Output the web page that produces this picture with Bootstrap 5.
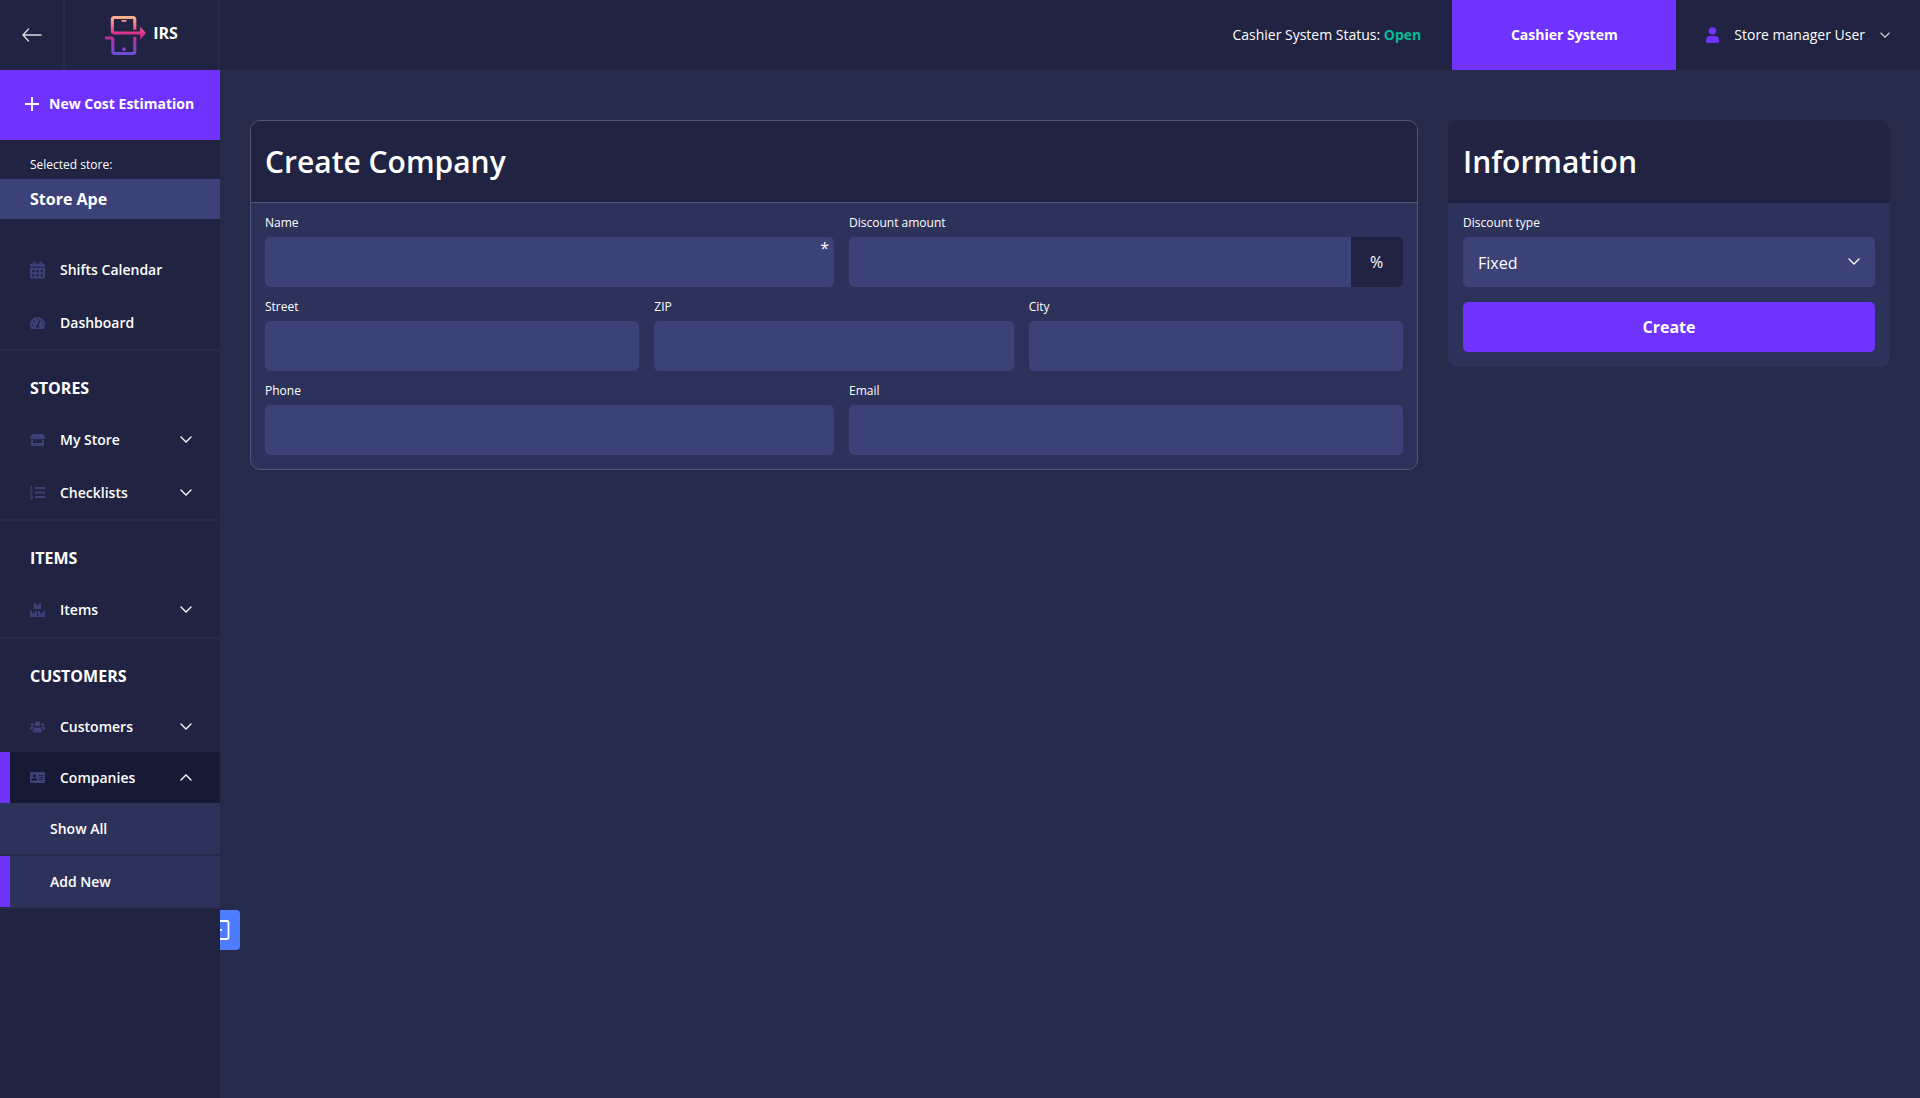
<!DOCTYPE html>
<html lang="en">
<head>
<meta charset="utf-8">
<meta name="viewport" content="width=device-width, initial-scale=1">
<title>IRS – Create Company</title>
<link href="https://cdn.jsdelivr.net/npm/bootstrap@5.3.0/dist/css/bootstrap.min.css" rel="stylesheet">
<style>
:root{--ink:#202341;--page:#272b4b;--panel:#2d325a;--field:#3c4278;--accent:#7033ff;--active:#171a35;--line:#505572}
body{font-family:"Open Sans","Noto Sans",sans-serif;font-size:14px;line-height:20px;color:#fff;background:var(--page)}
a,a:hover{color:#fff;text-decoration:none}
svg{display:block;flex:none}
.topbar{height:70px;background:var(--ink)}
.brand-zone{width:220px;border-right:2px solid var(--page)}
.back-link{width:65px;border-right:2px solid var(--page)}
.brand-link{font-size:16px;font-weight:700;gap:6px}
.brand-mark{margin-top:4px}
.status{margin-right:31px}
.status b{color:#00bd97;font-weight:700}
.cashier{width:224px;background:var(--accent);font-weight:700}
.user-menu{padding:0 30px;gap:15px;color:#fff;background:none;border:0}
.sidebar{width:220px;background:var(--ink);z-index:2}
.estimate{height:70px;padding:0 0 2px 25px;gap:10px;background:var(--accent);font-weight:700}
.store-label{height:39px;padding:15px 30px 0;font-size:12px}
.store-name{height:40px;padding:0 30px;background:var(--field);font-size:16px;font-weight:700}
.side-group{border-bottom:2px solid var(--page)}
.side-first{padding-top:24px}
.side-single{padding-bottom:1px}
.side-title{height:62px;padding:13px 30px 0;margin:0;font-size:16px;font-weight:700}
.side-item{height:53px;padding:0 28px 0 30px;font-weight:600}
.side-item .ico{color:var(--field);margin-right:15px}
.side-tight .side-item{height:51px}
.side-tight .side-item.current{background:var(--active)}
.current{border-left:10px solid var(--accent)}
.side-item.current{padding-left:20px}
.sub-item{height:51px;margin-bottom:2px;padding-left:50px;font-weight:600;background:var(--panel)}
.sub-list{background:var(--page)}
.sub-item.current{padding-left:40px}
.side-tight{border-bottom:0}
.drawer-tab{left:-20px;top:840px;width:40px;height:40px;padding:0 0 0 9px;background:#4d7cff;border:0;border-radius:4px}
.content{padding:50px 30px 30px;gap:30px}
.panel{background:var(--panel);border:0;border-radius:10px;color:#fff;overflow:hidden}
.panel-head{height:83px;padding:0 15px;background:var(--ink)}
.panel-head h1,.panel-head h2{font-size:30px;line-height:40px;font-weight:600;margin:0}
.panel-body{padding:15px}
.field-stack{gap:15px}
.panel-lined{border:1px solid var(--line)}
.panel-lined .panel-head{height:82px;padding:0 14px;border-bottom:1px solid var(--line)}
.panel-lined .panel-body{padding:15px 14px 14px}
.info-panel{width:442px}
.grid-two,.grid-three{display:grid;gap:15px}
.grid-two{grid-template-columns:569fr 554fr}
.grid-three{grid-template-columns:374fr 359fr 374fr}
.field-label{display:block;font-size:12px;line-height:10px;padding-bottom:9px;margin:0}
.field-box,.field-box:focus{height:50px;background-color:var(--field);border:0;border-radius:5px;color:#fff;padding:0 15px;font-size:16px}
.required-mark{top:0;right:5px;font-size:16px;line-height:22px}
.unit{width:53px;background:var(--ink);border:0;border-radius:5px;color:#fff;font-size:16px;padding:0}
.pick,.pick:focus{padding-top:2px;background-image:url("data:image/svg+xml,%3Csvg xmlns='http://www.w3.org/2000/svg' viewBox='0 0 12 8' fill='none' stroke='white' stroke-width='1.3' stroke-linecap='round'%3E%3Cpath d='M1 1l5 5 5-5'/%3E%3C/svg%3E");background-size:12px 8px;background-position:right 15px center}
.create-btn,.create-btn:hover{height:50px;background:var(--accent);border:0;border-radius:5px;color:#fff;font-size:16px;font-weight:700}
</style>
</head>
<body>
<svg width="0" height="0" class="position-absolute" aria-hidden="true">
  <symbol id="down" viewBox="0 0 12 8"><path d="M1 1l5 5 5-5" fill="none" stroke="#fff" stroke-width="1.3" stroke-linecap="round"/></symbol>
  <symbol id="up" viewBox="0 0 12 8"><path d="M1 6l5-5 5 5" fill="none" stroke="#fff" stroke-width="1.3" stroke-linecap="round"/></symbol>
</svg>
<div class="d-flex flex-column min-vh-100">
  <header class="topbar d-flex align-items-stretch">
    <div class="brand-zone d-flex">
      <a href="#" class="back-link d-flex align-items-center justify-content-center" aria-label="Back">
        <svg width="20" height="14" viewBox="0 0 20 14" fill="none" stroke="#fff" stroke-opacity=".85" stroke-width="1.3" stroke-linecap="round" stroke-linejoin="round"><path d="M19 7H1M6.500 1L1 7l5.500 6"/></svg>
      </a>
      <a href="#" class="brand-link d-flex flex-fill align-items-center justify-content-center pb-1">
        <svg class="brand-mark" width="42" height="41" viewBox="0 0 43 42" fill="none">
          <defs><linearGradient id="lg" gradientUnits="userSpaceOnUse" x1="0" y1="1" x2="0" y2="41"><stop offset="0" stop-color="#ffb98c"/><stop offset=".28" stop-color="#f0698a"/><stop offset=".45" stop-color="#d92f8d"/><stop offset=".6" stop-color="#b52f9f"/><stop offset="1" stop-color="#6a50dc"/></linearGradient></defs>
          <path d="M30.500 15V4.500a2 2 0 0 0-2-2h-19a2 2 0 0 0-2 2v12a2 2 0 0 0 2 2H37M0 23.500h6a2 2 0 0 1 2 2v12a2 2 0 0 0 2 2h18.500a2 2 0 0 0 2-2V22.500" stroke="url(#lg)" stroke-width="3.200"/>
          <path d="M36 12l6 6.500-6 6.500zM17 5h5v2h-5zM21.500 35a2 2 0 1 1-4 0 2 2 0 0 1 4 0z" fill="url(#lg)"/>
        </svg>
        <span>IRS</span>
      </a>
    </div>
    <div class="status ms-auto align-self-center">Cashier System Status: <b>Open</b></div>
    <a href="#" class="cashier d-flex align-items-center justify-content-center">Cashier System</a>
    <button type="button" class="user-menu d-flex align-items-center">
      <svg width="13" height="16" viewBox="0 0 13 16" fill="#7033ff"><circle cx="6.500" cy="4" r="3.800"/><path d="M3 9h7q3 .5 3 4.500V14q0 2-1.500 2h-10Q0 16 0 14v-.5Q0 9.500 3 9z"/></svg>
      <span>Store manager User</span>
      <svg width="10" height="7" opacity=".8"><use href="#down"/></svg>
    </button>
  </header>

  <div class="d-flex flex-fill">
    <aside class="sidebar position-relative flex-shrink-0">
      <a href="#" class="estimate d-flex align-items-center">
        <svg width="14" height="14" viewBox="0 0 14 14" stroke="#fff" stroke-width="1.800"><path d="M7 0v14M0 7h14"/></svg>
        <span>New Cost Estimation</span>
      </a>
      <div class="store-label">Selected store:</div>
      <div class="store-name d-flex align-items-center">Store Ape</div>
      <nav aria-label="Main">
        <div class="side-group side-first">
          <a href="#" class="side-item d-flex align-items-center">
            <svg class="ico" width="15" height="18" viewBox="0 0 448 512" fill="currentColor"><path fill-rule="evenodd" d="M0 464c0 26.500 21.500 48 48 48h352c26.500 0 48-21.500 48-48V192H0zM64 256h64v64H64zm128 0h64v64h-64zm128 0h64v64h-64zM64 384h64v64H64zm128 0h64v64h-64zm128 0h64v64h-64zM400 64h-48V16c0-8.800-7.200-16-16-16h-32c-8.800 0-16 7.200-16 16v48H160V16c0-8.800-7.200-16-16-16h-32c-8.800 0-16 7.200-16 16v48H48C21.500 64 0 85.500 0 112v48h448v-48c0-26.500-21.500-48-48-48z"/></svg>
            Shifts Calendar</a>
          <a href="#" class="side-item d-flex align-items-center">
            <svg class="ico" width="15" height="12" viewBox="0 0 30 24"><path d="M15 0a15 15 0 0 1 15 15q0 4-2 8-.5 1-2 1H4q-1.500 0-2-1-2-4-2-8A15 15 0 0 1 15 0z" fill="currentColor"/><g fill="#202341"><circle cx="15" cy="4" r="1.700"/><circle cx="7.500" cy="8" r="1.700"/><circle cx="4.500" cy="16" r="1.700"/><circle cx="25.500" cy="16" r="1.700"/><circle cx="24" cy="9" r="1.500"/><path d="M19 5l2 .6-3.500 10.400q2 3-.5 5.400h-4q-2.500-4 2-6.500z"/></g></svg>
            Dashboard</a>
        </div>
        <div class="side-group">
          <h2 class="side-title d-flex align-items-center">STORES</h2>
          <a href="#" class="side-item d-flex align-items-center">
            <svg class="ico" width="15" height="12" viewBox="0 0 30 24" fill="currentColor"><path d="M4 0h22l4 7q0 4-3.500 4T22 9q-1.500 2-3.500 2T15 9q-1.500 2-3.500 2T8 9q-1 2-4.500 2T0 7zM2 12h4v6h18v-6h4v10q0 2-2 2H4q-2 0-2-2z"/></svg>
            My Store<svg class="ms-auto" width="12" height="8"><use href="#down"/></svg></a>
          <a href="#" class="side-item d-flex align-items-center">
            <svg class="ico" width="15" height="13" viewBox="0 0 30 26" fill="currentColor"><path d="M10 2h20v4H10zm0 9h20v4H10zm0 9h20v4H10zM1 0h3v6h1v1H0V6h2V2H1zM0 9h5v4l-3 3h3v1H0v-2l3-3v-1H0zM0 19h5v7H0v-2h3v-1H1v-1h2v-1H0z"/></svg>
            Checklists<svg class="ms-auto" width="12" height="8"><use href="#down"/></svg></a>
        </div>
        <div class="side-group side-single">
          <h2 class="side-title d-flex align-items-center">ITEMS</h2>
          <a href="#" class="side-item d-flex align-items-center">
            <svg class="ico" width="15" height="14" viewBox="0 0 30 28" fill="currentColor"><path d="M8 0h4v5l3-1.500L18 5V0h4v12H8zM0 16h4v5l3-1.500 3 1.500v-5h4v12H0zm16 0h4v5l3-1.500 3 1.500v-5h4v12H16z"/></svg>
            Items<svg class="ms-auto" width="12" height="8"><use href="#down"/></svg></a>
        </div>
        <div class="side-group side-tight">
          <h2 class="side-title d-flex align-items-center">CUSTOMERS</h2>
          <a href="#" class="side-item d-flex align-items-center">
            <svg class="ico" width="15" height="12" viewBox="0 0 30 24" fill="currentColor"><circle cx="15" cy="5.500" r="5.200"/><circle cx="4.500" cy="7" r="3"/><circle cx="25.500" cy="7" r="3"/><path d="M6 21q0-8 6-8 3 1.500 6 0 6 0 6 8 0 2-2 2H8q-2 0-2-2zM0 17v-2q0-4 3-4h3q1.500 0 2.500 1Q5 14 4.500 17zM30 17v-2q0-4-3-4h-3q-1.500 0-2.500 1 3.500 2 4 5z"/></svg>
            Customers<svg class="ms-auto" width="12" height="8"><use href="#down"/></svg></a>
          <a href="#" class="side-item current d-flex align-items-center">
            <svg class="ico" width="15" height="11" viewBox="0 0 30 22"><rect width="30" height="22" rx="2.500" fill="currentColor"/><g fill="#171a35"><circle cx="9" cy="7.500" r="3"/><path d="M3.500 17q0-5 3.500-5 2 1 4 0 3.500 0 3.500 5zM18 6h9v1.500h-9zM18 10h9v1.500h-9zM18 14h9v1.500h-9z"/></g></svg>
            Companies<svg class="ms-auto" width="12" height="8"><use href="#up"/></svg></a>
          <div class="sub-list d-flex flex-column">
            <a href="#" class="sub-item d-flex align-items-center">Show All</a>
            <a href="#" class="sub-item current d-flex align-items-center">Add New</a>
          </div>
        </div>
      </nav>
    </aside>

    <main class="position-relative flex-fill">
      <button type="button" class="drawer-tab position-absolute" aria-label="Open drawer">
        <svg width="21" height="20" viewBox="0 0 21 20" fill="none" stroke="#fff" stroke-width="1.800"><rect x="1" y="1" width="18.500" height="18" rx="1.500"/><path d="M6 10h7"/></svg>
      </button>
      <form class="content d-flex align-items-start">
        <section class="panel panel-lined flex-fill">
          <div class="panel-head d-flex align-items-center"><h1>Create Company</h1></div>
          <div class="panel-body field-stack d-flex flex-column">
            <div class="grid-two">
              <div>
                <label class="field-label" for="name">Name</label>
                <div class="position-relative"><input id="name" class="form-control field-box" type="text" required><span class="required-mark position-absolute">*</span></div>
              </div>
              <div>
                <label class="field-label" for="amount">Discount amount</label>
                <div class="input-group"><input id="amount" class="form-control field-box" type="text"><span class="unit input-group-text justify-content-center">%</span></div>
              </div>
            </div>
            <div class="grid-three">
              <div><label class="field-label" for="street">Street</label><input id="street" class="form-control field-box" type="text"></div>
              <div><label class="field-label" for="zip">ZIP</label><input id="zip" class="form-control field-box" type="text"></div>
              <div><label class="field-label" for="city">City</label><input id="city" class="form-control field-box" type="text"></div>
            </div>
            <div class="grid-two">
              <div><label class="field-label" for="phone">Phone</label><input id="phone" class="form-control field-box" type="tel"></div>
              <div><label class="field-label" for="email">Email</label><input id="email" class="form-control field-box" type="email"></div>
            </div>
          </div>
        </section>
        <section class="panel info-panel flex-shrink-0">
          <div class="panel-head d-flex align-items-center"><h2>Information</h2></div>
          <div class="panel-body field-stack d-flex flex-column">
            <div>
              <label class="field-label" for="type">Discount type</label>
              <select id="type" class="form-select field-box pick"><option>Fixed</option><option>Percentage</option></select>
            </div>
            <button type="submit" class="btn create-btn w-100">Create</button>
          </div>
        </section>
      </form>
    </main>
  </div>
</div>
<script src="https://cdn.jsdelivr.net/npm/bootstrap@5.3.0/dist/js/bootstrap.bundle.min.js"></script>
</body>
</html>
